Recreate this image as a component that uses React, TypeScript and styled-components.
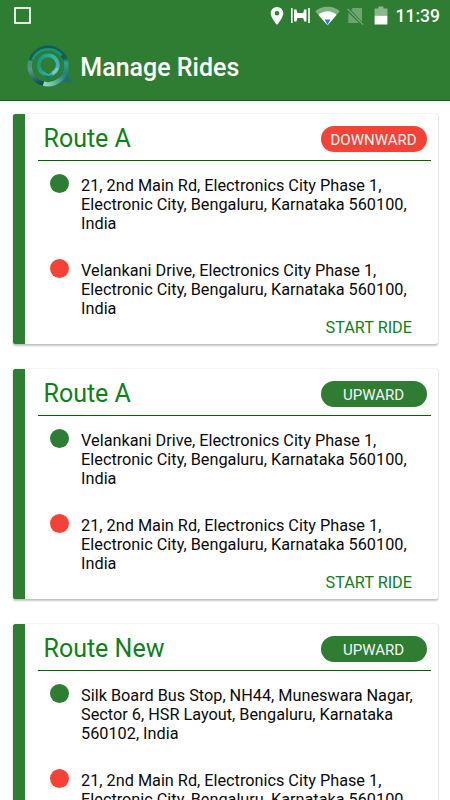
import React from "react";
import styled, { createGlobalStyle } from "styled-components";

const GREEN = "#2e7d32";
const RED = "#f44336";

const GlobalStyle = createGlobalStyle`
  html, body { margin: 0; padding: 0; background: #fff; }
  body { font-family: Roboto, sans-serif; overflow: hidden; }
  * { box-sizing: border-box; }
`;

const Screen = styled.div`
  width: 450px;
  height: 800px;
  overflow: hidden;
  background: #fff;
`;

const Header = styled.header`
  height: 101px;
  background: ${GREEN};
  border-bottom: 1px solid #006b05;
  color: #fff;
`;

const StatusBar = styled.div`
  height: 31px;
  display: flex;
  justify-content: space-between;
`;

const StatusIcons = styled.svg`
  display: block;
`;

const StatusRight = styled.div`
  display: flex;
`;

const Clock = styled.span`
  width: 54.5px;
  font-size: 17.5px;
  font-weight: 500;
  line-height: 33px;
  white-space: nowrap;
`;

const TitleBar = styled.div`
  height: 69px;
  display: flex;
  padding-left: 25px;
`;

const Logo = styled.svg`
  width: 50px;
  height: 50px;
  margin-top: 12px;
`;

const Title = styled.h1`
  margin: 0 0 0 5.3px;
  font-size: 25px;
  font-weight: 500;
  line-height: 74px;
  white-space: nowrap;
`;

const List = styled.main`
  display: flex;
  flex-direction: column;
  gap: 25px;
  padding: 13px 12.5px 0;
`;

const Card = styled.article`
  flex: none;
  height: 230px;
  padding-right: 6.5px;
  border-left: 12.5px solid ${GREEN};
  border-radius: 2.5px;
  background: #fff;
  box-shadow: 0 1.5px 2px rgba(0, 0, 0, 0.22), 0 0 1.5px rgba(0, 0, 0, 0.18);
`;

const CardHeader = styled.div`
  height: 47px;
  margin-left: 13px;
  padding: 0 4.5px 0 6px;
  display: flex;
  justify-content: space-between;
  border-bottom: 1px solid #006400;
`;

const RouteName = styled.h2`
  margin: 0;
  color: #108018;
  font-size: 25px;
  font-weight: 400;
  line-height: 49px;
`;

const Direction = styled.span<{ $color: string }>`
  width: 106px;
  height: 26px;
  margin-top: 12px;
  border-radius: 13px;
  background: ${(p) => p.$color};
  color: #f5f5f5;
  font-size: 15px;
  line-height: 28px;
  text-align: center;
`;

const Stop = styled.div`
  height: 85px;
  display: flex;
  padding: 13px 0 0 25px;
`;

const Dot = styled.span<{ $color: string }>`
  flex: none;
  width: 19px;
  height: 19px;
  border-radius: 50%;
  background: ${(p) => p.$color};
`;

const Address = styled.p`
  margin: 3px 0 0 12.6px;
  color: #0a0a0a;
  font-size: 16.25px;
  line-height: 18.75px;
  white-space: pre;
`;

const StartButton = styled.button`
  display: block;
  margin: -13px 19px 0 auto;
  padding: 0;
  border: 0;
  background: none;
  color: #108018;
  font: 400 16.25px/20px Roboto, sans-serif;
`;

const MAIN_RD = "21, 2nd Main Rd, Electronics City Phase 1,\nElectronic City, Bengaluru, Karnataka 560100,\nIndia";
const VELANKANI = "Velankani Drive, Electronics City Phase 1,\nElectronic City, Bengaluru, Karnataka 560100,\nIndia";
const SILK_BOARD = "Silk Board Bus Stop, NH44, Muneswara Nagar,\nSector 6, HSR Layout, Bengaluru, Karnataka\n560102, India";

const rides = [
  { name: "Route A", direction: "DOWNWARD", from: MAIN_RD, to: VELANKANI },
  { name: "Route A", direction: "UPWARD", from: VELANKANI, to: MAIN_RD },
  { name: "Route New", direction: "UPWARD", from: SILK_BOARD, to: MAIN_RD },
];

function AppLogo() {
  return (
    <Logo viewBox="25 43 50 50" fill="none">
      <defs>
        <linearGradient id="left" x1="30" y1="58" x2="40" y2="84" gradientUnits="userSpaceOnUse">
          <stop stopColor="#2d9478" />
          <stop offset="0.4" stopColor="#5d9485" />
          <stop offset="1" stopColor="#0a4d52" />
        </linearGradient>
        <linearGradient id="bottom" x1="43" y1="84" x2="64" y2="76" gradientUnits="userSpaceOnUse">
          <stop stopColor="#9fd8cc" />
          <stop offset="0.5" stopColor="#62baa2" />
          <stop offset="1" stopColor="#26857c" />
        </linearGradient>
        <linearGradient id="right" x1="65" y1="57" x2="66" y2="76" gradientUnits="userSpaceOnUse">
          <stop stopColor="#0b5751" />
          <stop offset="0.3" stopColor="#2fa294" />
          <stop offset="1" stopColor="#207d78" />
        </linearGradient>
        <linearGradient id="pin" x1="38" y1="60" x2="59" y2="66" gradientUnits="userSpaceOnUse">
          <stop stopColor="#169480" />
          <stop offset="0.65" stopColor="#2cb8a6" />
          <stop offset="1" stopColor="#4ca8dc" />
        </linearGradient>
      </defs>
      <path d="M65 71 72 83 60 81.5 58 79Z" fill="#1d716d" />
      <path d="M30.8 59.5A18.4 18.4 0 0 0 43.5 83.7" stroke="url(#left)" strokeWidth="4.4" />
      <path d="M43.5 83.7C50 85.5 55 83.5 59 80.5Q64 78 65.5 72" stroke="url(#bottom)" strokeWidth="4.4" />
      <path d="M64.5 56.5Q68 65 65.2 74" stroke="url(#right)" strokeWidth="4.4" />
      <path d="M30.7 60.5A18.4 18.4 0 0 1 65.2 59" stroke="#0d5f55" strokeWidth="4.2" />
      <path d="M32.2 60.2A17.2 17.2 0 0 1 61.5 55.5" stroke="#1a947d" strokeWidth="2.4" />
      <path d="M43.6 73.4a9.6 9.6 0 1 1 9.2 0L48.3 76.8Z" stroke="url(#pin)" strokeWidth="3.6" />
      <path d="M52.5 73.4q3.4-1.8 4.8-5.4" stroke="#72cfbc" strokeWidth="3.4" />
      <path d="M43.3 74.5 48.3 80 52.5 75 48.3 76Z" fill="#17756e" />
    </Logo>
  );
}

function SystemBar() {
  return (
    <StatusBar>
      <StatusIcons width="40" height="31" viewBox="0 0 40 31">
        <rect x="15" y="8" width="15" height="15" fill="none" stroke="#fff" strokeWidth="1.7" />
      </StatusIcons>
      <StatusRight>
        <StatusIcons width="136" height="31" viewBox="260 0 136 31" fill="#fff">
          <path fillRule="evenodd" d="M277 7a6.3 6.3 0 0 0-6.3 6.3c0 4.8 6.3 11.5 6.3 11.5s6.3-6.7 6.3-11.5A6.3 6.3 0 0 0 277 7Zm0 4a2.3 2.3 0 1 1 0 4.6 2.3 2.3 0 0 1 0-4.6Z" />
          <path d="M291 8h1.6v15H291zM294 9.5h2.4l1 3.5h5.8l1-3.5h2.3v12h-2.3l-1-3.5h-5.8l-1 3.5H294zM308.2 8h1.6v15h-1.6z" />
          <path opacity="0.4" d="M315.3 11.3a19 19 0 0 1 24.5 0L327.5 25.2Z" />
          <path d="M318.5 14.9c5-5 13-5 18 0L327.5 25.2Z" />
          <path d="M324.7 19.5h5.6l-2.8 5.4Z" fill="#167df0" />
          <path opacity="0.3" d="M352.5 8h9.5v14L351 10ZM348.3 12.5 359 23h-10.7Z" />
          <path d="M347.6 9 363 24.6" stroke="#75ae78" strokeWidth="1.2" />
          <path opacity="0.45" d="M378.4 6.5h5v2h4v7.2h-12.8V8.5h3.8Z" />
          <path d="M374.6 15.7h12.8v8.8h-12.8z" />
        </StatusIcons>
        <Clock>11:39</Clock>
      </StatusRight>
    </StatusBar>
  );
}

export default function App() {
  return (
    <Screen>
      <GlobalStyle />
      <Header>
        <SystemBar />
        <TitleBar>
          <AppLogo />
          <Title>Manage Rides</Title>
        </TitleBar>
      </Header>
      <List>
        {rides.map((ride, i) => (
          <Card key={i}>
            <CardHeader>
              <RouteName>{ride.name}</RouteName>
              <Direction $color={ride.direction === "UPWARD" ? GREEN : RED}>{ride.direction}</Direction>
            </CardHeader>
            <Stop>
              <Dot $color={GREEN} />
              <Address>{ride.from}</Address>
            </Stop>
            <Stop>
              <Dot $color={RED} />
              <Address>{ride.to}</Address>
            </Stop>
            <StartButton>START RIDE</StartButton>
          </Card>
        ))}
      </List>
    </Screen>
  );
}
